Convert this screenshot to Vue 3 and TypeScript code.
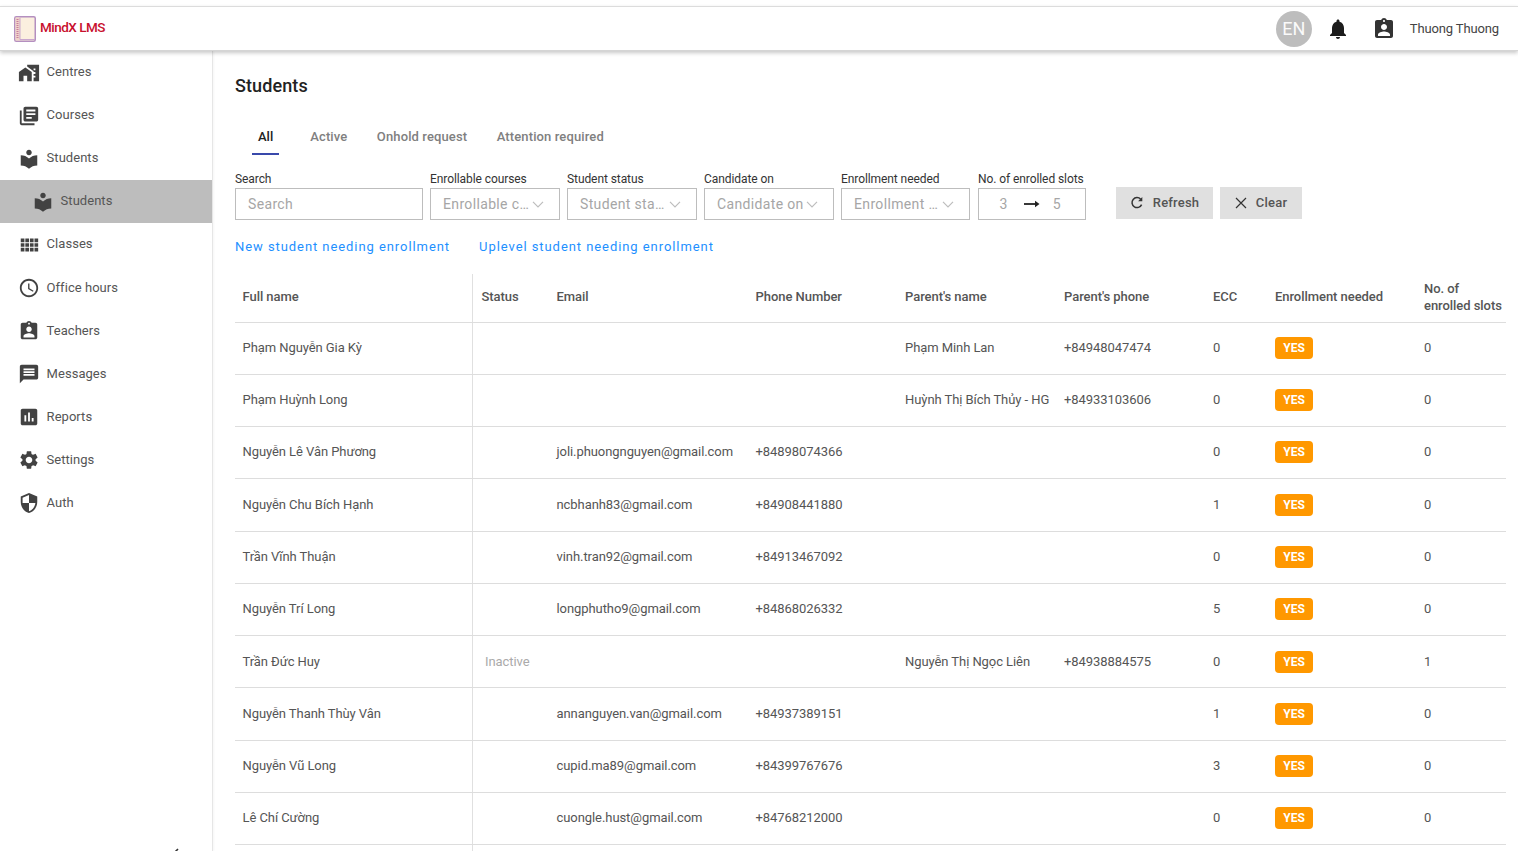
<script setup lang="ts">
interface NavItem { label: string; path: string; child?: boolean; active?: boolean }
interface Row { name: string; status?: string; email?: string; phone?: string; parent?: string; parentPhone?: string; ecc: number; slots: number }

const library = 'M12 11.55C9.64 9.35 6.48 8 3 8v11c3.48 0 6.64 1.35 9 3.55 2.36-2.19 5.52-3.55 9-3.55V8c-3.48 0-6.64 1.35-9 3.55zM12 8c1.66 0 3-1.34 3-3s-1.34-3-3-3-3 1.34-3 3 1.34 3 3 3z'
const badge = 'M19 3h-4.18C14.4 1.84 13.3 1 12 1c-1.3 0-2.4.84-2.82 2H5c-1.1 0-2 .9-2 2v14c0 1.1.9 2 2 2h14c1.1 0 2-.9 2-2V5c0-1.1-.9-2-2-2zm-7 0c.55 0 1 .45 1 1s-.45 1-1 1-1-.45-1-1 .45-1 1-1zm0 4c1.66 0 3 1.34 3 3s-1.34 3-3 3-3-1.34-3-3 1.34-3 3-3zm6 12H6v-1.4c0-2 4-3.1 6-3.1s6 1.1 6 3.1V19z'
const bell = 'M12 22c1.1 0 2-.9 2-2h-4c0 1.1.89 2 2 2zm6-6v-5c0-3.07-1.64-5.64-4.5-6.32V4c0-.83-.67-1.5-1.5-1.5s-1.5.67-1.5 1.5v.68C7.63 5.36 6 7.92 6 11v5l-2 2v1h16v-1l-2-2z'

const nav: NavItem[] = [
  { label: 'Centres', path: 'M1 11v10h5v-6h4v6h5V11L8 6z M10 3v1.97l7 5V11h2v2h-2v2h2v2h-2v4h6V3H10zm9 6h-2V7h2v2z' },
  { label: 'Courses', path: 'M4 6H2v14c0 1.1.9 2 2 2h14v-2H4V6zm16-4H8c-1.1 0-2 .9-2 2v12c0 1.1.9 2 2 2h12c1.1 0 2-.9 2-2V4c0-1.1-.9-2-2-2zm-1 9H9V9h10v2zm-4 4H9v-2h6v2zm4-8H9V5h10v2z' },
  { label: 'Students', path: library },
  { label: 'Students', path: library, child: true, active: true },
  { label: 'Classes', path: 'M3 9h4V5H3v4zm0 5h4v-4H3v4zm5 0h4v-4H8v4zm5 0h4v-4h-4v4zM8 9h4V5H8v4zm5-4v4h4V5h-4zm5 9h4v-4h-4v4zM3 19h4v-4H3v4zm5 0h4v-4H8v4zm5 0h4v-4h-4v4zm5 0h4v-4h-4v4zm0-14v4h4V5h-4z' },
  { label: 'Office hours', path: 'M11.99 2C6.47 2 2 6.48 2 12s4.47 10 9.99 10C17.52 22 22 17.52 22 12S17.52 2 11.99 2zM12 20c-4.42 0-8-3.58-8-8s3.58-8 8-8 8 3.58 8 8-3.58 8-8 8zm.5-13H11v6l5.25 3.15.75-1.23-4.5-2.67z' },
  { label: 'Teachers', path: badge },
  { label: 'Messages', path: 'M20 2H4c-1.1 0-1.99.9-1.99 2L2 22l4-4h14c1.1 0 2-.9 2-2V4c0-1.1-.9-2-2-2zm-2 12H6v-2h12v2zm0-3H6V9h12v2zm0-3H6V6h12v2z' },
  { label: 'Reports', path: 'M19 3H5c-1.1 0-2 .9-2 2v14c0 1.1.9 2 2 2h14c1.1 0 2-.9 2-2V5c0-1.1-.9-2-2-2zM9 17H7v-7h2v7zm4 0h-2V7h2v10zm4 0h-2v-4h2v4z' },
  { label: 'Settings', path: 'M19.14 12.94c.04-.3.06-.61.06-.94 0-.32-.02-.64-.07-.94l2.03-1.58c.18-.14.23-.41.12-.61l-1.92-3.32c-.12-.22-.37-.29-.59-.22l-2.39.96c-.5-.38-1.03-.7-1.62-.94l-.36-2.54c-.04-.24-.24-.41-.48-.41h-3.84c-.24 0-.43.17-.47.41l-.36 2.54c-.59.24-1.13.57-1.62.94l-2.39-.96c-.22-.08-.47 0-.59.22L2.74 8.87c-.12.21-.08.47.12.61l2.03 1.58c-.05.3-.09.63-.09.94s.02.64.07.94l-2.03 1.58c-.18.14-.23.41-.12.61l1.92 3.32c.12.22.37.29.59.22l2.39-.96c.5.38 1.03.7 1.62.94l.36 2.54c.05.24.24.41.48.41h3.84c.24 0 .44-.17.47-.41l.36-2.54c.59-.24 1.13-.56 1.62-.94l2.39.96c.22.08.47 0 .59-.22l1.92-3.32c.12-.22.07-.47-.12-.61l-2.01-1.58zM12 15.6c-1.98 0-3.6-1.62-3.6-3.6s1.62-3.6 3.6-3.6 3.6 1.62 3.6 3.6-1.62 3.6-3.6 3.6z' },
  { label: 'Auth', path: 'M12 1L3 5v6c0 5.55 3.84 10.74 9 12 5.16-1.26 9-6.45 9-12V5l-9-4zm0 10.99h7c-.53 4.12-3.28 7.79-7 8.94V12H5V6.3l7-3.11v8.8z' },
]

const tabs = ['All', 'Active', 'Onhold request', 'Attention required']
const selects = [
  { label: 'Enrollable courses', value: 'Enrollable c…', cls: 'w130' },
  { label: 'Student status', value: 'Student sta…', cls: 'w130' },
  { label: 'Candidate on', value: 'Candidate on', cls: 'w130' },
  { label: 'Enrollment needed', value: 'Enrollment …', cls: 'w129' },
]
const columns = ['Full name', 'Status', 'Email', 'Phone Number', "Parent's name", "Parent's phone", 'ECC', 'Enrollment needed', 'No. of enrolled slots']
const widths = [237.5, 76.5, 199, 149.5, 159, 149, 62, 149, 89.5]

const rows: Row[] = [
  { name: 'Phạm Nguyễn Gia Kỳ', parent: 'Phạm Minh Lan', parentPhone: '+84948047474', ecc: 0, slots: 0 },
  { name: 'Phạm Huỳnh Long', parent: 'Huỳnh Thị Bích Thủy - HG', parentPhone: '+84933103606', ecc: 0, slots: 0 },
  { name: 'Nguyễn Lê Vân Phương', email: 'joli.phuongnguyen@gmail.com', phone: '+84898074366', ecc: 0, slots: 0 },
  { name: 'Nguyễn Chu Bích Hạnh', email: 'ncbhanh83@gmail.com', phone: '+84908441880', ecc: 1, slots: 0 },
  { name: 'Trần Vĩnh Thuận', email: 'vinh.tran92@gmail.com', phone: '+84913467092', ecc: 0, slots: 0 },
  { name: 'Nguyễn Trí Long', email: 'longphutho9@gmail.com', phone: '+84868026332', ecc: 5, slots: 0 },
  { name: 'Trần Đức Huy', status: 'Inactive', parent: 'Nguyễn Thị Ngọc Liên', parentPhone: '+84938884575', ecc: 0, slots: 1 },
  { name: 'Nguyễn Thanh Thùy Vân', email: 'annanguyen.van@gmail.com', phone: '+84937389151', ecc: 1, slots: 0 },
  { name: 'Nguyễn Vũ Long', email: 'cupid.ma89@gmail.com', phone: '+84399767676', ecc: 3, slots: 0 },
  { name: 'Lê Chí Cường', email: 'cuongle.hust@gmail.com', phone: '+84768212000', ecc: 0, slots: 0 },
]
</script>

<template>
  <div class="app">
    <header class="topbar">
      <div class="brand">
        <svg class="logo" width="22" height="26" viewBox="0 0 22 26">
          <rect x="0.75" y="0.75" width="20.5" height="24.5" rx="1.5" fill="#fbefdf" stroke="#b48fc0" stroke-width="1.5" />
          <rect x="1.5" y="1.5" width="4.5" height="23" fill="#f0d3c8" />
          <path d="M3.5 3v20" stroke="#c77f9f" stroke-width="2" stroke-dasharray="1 1" />
          <path d="M6 1.5v22h15" fill="none" stroke="#c9a7ce" stroke-width="1" />
        </svg>
        <span class="brand-name">MindX LMS</span>
      </div>
      <div class="top-right">
        <div class="lang">EN</div>
        <svg class="bell" width="24" height="24" viewBox="0 0 24 24"><path :d="bell" fill="#1c1c1c" /></svg>
        <svg class="user-icon" width="24" height="24" viewBox="0 0 24 24"><path :d="badge" fill="#333" /></svg>
        <span class="user-name">Thuong Thuong</span>
      </div>
    </header>

    <div class="body">
      <aside class="sidebar">
        <a v-for="(item, i) in nav" :key="i" class="nav-item" :class="{ child: item.child, active: item.active }">
          <svg width="22" height="22" viewBox="0 0 24 24"><path :d="item.path" fill="#424242" /></svg>
          <span class="nav-label">{{ item.label }}</span>
        </a>
        <svg class="collapse" width="12" height="12" viewBox="0 0 12 12"><path d="M8 1L3 6l5 5" fill="none" stroke="#333" stroke-width="1.6" /></svg>
      </aside>

      <main class="content">
        <h1 class="title">Students</h1>

        <nav class="tabs">
          <span v-for="(t, i) in tabs" :key="t" class="tab" :class="{ on: i === 0 }">{{ t }}</span>
        </nav>

        <section class="filters">
          <label class="field">
            <span class="field-label">Search</span>
            <span class="box search-box"><span class="ph">Search</span></span>
          </label>
          <label v-for="s in selects" :key="s.label" class="field" :class="s.cls">
            <span class="field-label">{{ s.label }}</span>
            <span class="box select-box">
              <span class="ph">{{ s.value }}</span>
              <svg width="12" height="12" viewBox="0 0 12 12"><path d="M1 3.8l5 5 5-5" fill="none" stroke="#bdbdbd" stroke-width="1.2" /></svg>
            </span>
          </label>
          <label class="field">
            <span class="field-label">No. of enrolled slots</span>
            <span class="box range-box">
              <span class="ph">3</span>
              <svg class="range-arrow" width="16" height="10" viewBox="0 0 16 10"><path d="M0 5h12" stroke="#222" stroke-width="1.8" /><path d="M11 1.8L15.5 5 11 8.2z" fill="#222" /></svg>
              <span class="ph">5</span>
            </span>
          </label>
          <button class="btn refresh" type="button">
            <svg width="14" height="14" viewBox="0 0 14 14"><path d="M11.6 8.6A5 5 0 1 1 10.7 3.2" fill="none" stroke="#333" stroke-width="1.5" /><path d="M12.3 1v4.2H8.1z" fill="#333" /></svg>
            Refresh
          </button>
          <button class="btn clear" type="button">
            <svg width="12" height="12" viewBox="0 0 12 12"><path d="M1 1l10 10M11 1L1 11" stroke="#333" stroke-width="1.2" /></svg>
            Clear
          </button>
        </section>

        <div class="links">
          <a>New student needing enrollment</a>
          <a>Uplevel student needing enrollment</a>
        </div>

        <table class="grid">
          <colgroup>
            <col v-for="(w, i) in widths" :key="i" :style="{ width: w + 'px' }" />
          </colgroup>
          <thead>
            <tr>
              <th v-for="c in columns" :key="c">{{ c }}</th>
            </tr>
          </thead>
          <tbody>
            <tr v-for="r in rows" :key="r.name">
              <td>{{ r.name }}</td>
              <td><span v-if="r.status" class="inactive">{{ r.status }}</span></td>
              <td>{{ r.email }}</td>
              <td>{{ r.phone }}</td>
              <td>{{ r.parent }}</td>
              <td>{{ r.parentPhone }}</td>
              <td>{{ r.ecc }}</td>
              <td><span class="yes">YES</span></td>
              <td>{{ r.slots }}</td>
            </tr>
            <tr>
              <td v-for="n in 9" :key="n"></td>
            </tr>
          </tbody>
        </table>
      </main>
    </div>
  </div>
</template>

<style>
html, body { margin: 0; padding: 0; overflow: hidden; background: #fff; }
</style>

<style scoped>
.app {
  height: 851px;
  overflow: hidden;
  display: flex;
  flex-direction: column;
  font-family: Roboto, "Liberation Sans", sans-serif;
  font-size: 13px;
  color: #555;
  background: #fff;
}
.topbar {
  flex: none;
  height: 43px;
  margin-top: 6px;
  border-top: 1px solid #dcdcdc;
  border-bottom: 1px solid #d5d5d5;
  box-shadow: 0 2px 4px rgba(0, 0, 0, .22);
  display: flex;
  align-items: center;
  justify-content: space-between;
  background: #fff;
  position: relative;
  z-index: 2;
}
.brand { display: flex; align-items: center; padding-left: 14px; gap: 4px; }
.logo { display: block; }
.brand-name { color: #c8102e; font-size: 13.5px; font-weight: 500; letter-spacing: -.5px; margin-bottom: 3px; }
.top-right { display: flex; align-items: center; padding-right: 19px; }
.lang {
  width: 36px; height: 36px; border-radius: 50%;
  background: #bdbdbd; color: #fafafa;
  font-size: 18px; display: flex; align-items: center; justify-content: center;
}
.bell { margin-left: 14px; }
.user-icon { margin-left: 22px; }
.user-name { margin-left: 14px; color: #444; font-size: 13px; letter-spacing: -.13px; }

.body { flex: 1; display: flex; min-height: 0; }
.sidebar {
  flex: none;
  width: 212px;
  border-right: 1px solid #e6e6e6;
  box-shadow: 1px 0 2px rgba(0, 0, 0, .04);
  position: relative;
}
.nav-item {
  height: 43.1px;
  display: flex;
  align-items: center;
  padding-left: 18.2px;
  gap: 6.4px;
  color: #555;
}
.nav-item svg { flex: none; }
.nav-label { margin-bottom: 2px; letter-spacing: .04px; }
.nav-item.child { padding-left: 32.2px; }
.nav-item.active { background: #bdbdbd; }
.collapse { position: absolute; left: 170px; bottom: -9px; }

.content { flex: 1; min-width: 0; padding: 0 12px 0 22px; }
.title {
  margin: 24px 0 0;
  font-size: 18px;
  line-height: 22px;
  font-weight: 500;
  color: #222;
  letter-spacing: .1px;
}
.tabs { display: flex; margin: 30px 0 0 8.25px; height: 28px; }
.tab {
  position: relative;
  padding: 0 14.75px;
  line-height: 20px;
  font-weight: 500;
  color: #808080;
  letter-spacing: .12px;
  white-space: nowrap;
}
.tab.on { color: #222; margin-right: 7.5px; letter-spacing: 0; }
.tab.on::after {
  content: "";
  position: absolute;
  left: 8.75px;
  right: 8.75px;
  bottom: 0;
  height: 2px;
  background: #3949ab;
}
.filters { display: flex; align-items: flex-end; margin-top: 16px; }
.field { display: flex; flex-direction: column; margin-right: 7px; }
.field-label { font-size: 12px; line-height: 16px; color: #333; margin-bottom: 1px; white-space: nowrap; letter-spacing: -.08px; }
.box {
  box-sizing: border-box;
  height: 32px;
  border: 1px solid #bdbdbd;
  display: flex;
  align-items: center;
  font-size: 14px;
  letter-spacing: .35px;
}
.ph { color: #a6a6a6; white-space: nowrap; }
.search-box { width: 188px; padding-left: 12px; }
.w130 { width: 130px; }
.w129 { width: 129px; margin-right: 8px; }
.select-box { padding: 0 15px 0 12px; justify-content: space-between; }
.range-box { width: 108px; padding: 0 24px 0 20.5px; justify-content: space-between; }
.range-arrow { margin-left: 3px; }
.btn {
  box-sizing: border-box;
  height: 32px;
  border: 0;
  background: #e0e0e0;
  display: flex;
  align-items: center;
  justify-content: center;
  gap: 9px;
  font-family: inherit;
  font-size: 13px;
  font-weight: 500;
  color: #555;
  letter-spacing: .2px;
  padding: 0 0 2px;
  margin-bottom: 1px;
}
.btn svg { margin-top: 2px; }
.refresh { width: 97px; margin-left: 23px; margin-right: 7px; }
.clear { width: 82px; }
.links { display: flex; gap: 29px; margin-top: 19px; line-height: 16px; letter-spacing: .93px; color: #1e90ff; }
.grid {
  margin-top: 19px;
  width: 1271px;
  table-layout: fixed;
  border-collapse: collapse;
}
.grid th {
  box-sizing: border-box;
  height: 48px;
  padding: 0 0 2px 7.5px;
  font-weight: 500;
  text-align: left;
  color: #555;
  line-height: 17px;
  border-bottom: 1px solid #ddd;
  letter-spacing: -.05px;
}
.grid td {
  box-sizing: border-box;
  height: 52.27px;
  padding: 0 0 1.4px 7.5px;
  border-bottom: 1px solid #ddd;
  white-space: nowrap;
  letter-spacing: -.07px;
}
.grid th:first-child, .grid td:first-child { border-right: 1px solid #e0e0e0; }
.grid th:nth-child(2), .grid td:nth-child(2) { padding-left: 8.5px; }
.inactive { padding-left: 3.5px; color: #aaa; }
.yes {
  display: inline-block;
  width: 38px;
  height: 22px;
  line-height: 22px;
  border-radius: 4px;
  background: #ff9800;
  color: #fff;
  font-size: 12px;
  font-weight: 700;
  text-align: center;
  vertical-align: middle;
  letter-spacing: 0;
  margin-top: 1px;
}
</style>
